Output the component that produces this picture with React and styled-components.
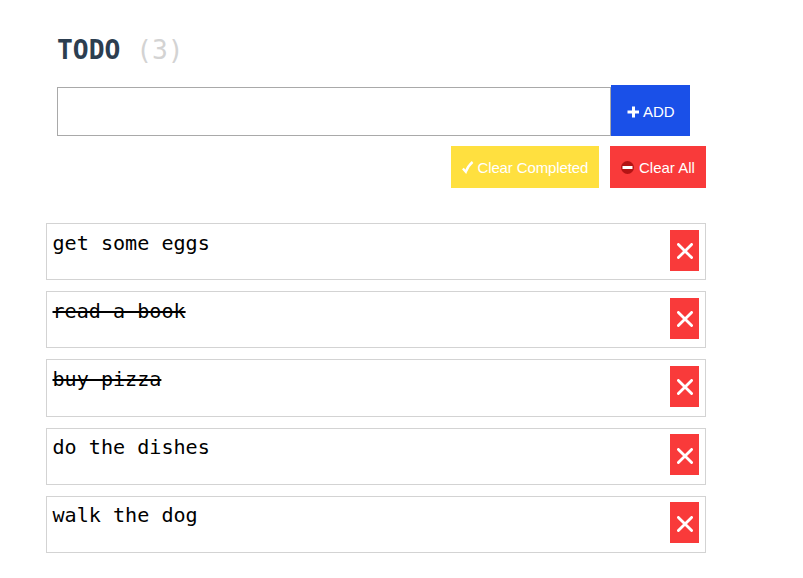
import React from "react";
import styled, { createGlobalStyle, css } from "styled-components";

const GlobalStyle = createGlobalStyle`
  * { box-sizing: border-box; }
  body { margin: 0; background: #fff; overflow: hidden; }
`;

const mono = `Consolas, "DejaVu Sans Mono", monospace`;
const sans = `"Liberation Sans", Arial, sans-serif`;

const Page = styled.main`
  width: 803px;
  height: 578px;
  padding: 30px 97px 0 46px;
  font-family: ${mono};
`;

const Title = styled.h1`
  margin: 0 0 0 11px;
  height: 55px;
  font-size: 26.3px;
  line-height: 40px;
  font-weight: 700;
  color: #2c3e50;
  white-space: pre;
`;

const Count = styled.span`
  font-weight: 400;
  color: #d3d3d3;
`;

const AddForm = styled.form`
  display: flex;
  align-items: flex-end;
  height: 51px;
  margin-left: 11px;
`;

const TextInput = styled.input`
  width: 554px;
  height: 49px;
  padding: 0 10px;
  border: 1px solid #a9a9a9;
  border-radius: 0;
  outline: none;
  font: 20px ${mono};
`;

const tones = {
  blue: css`background: #1a50e8;`,
  yellow: css`background: #ffe03f;`,
  red: css`background: #f93a3a;`,
};

const Button = styled.button`
  display: flex;
  align-items: center;
  width: ${(p) => p.$width}px;
  height: ${(p) => p.$height}px;
  padding: ${(p) => p.$top || 0}px 0 0 ${(p) => p.$inset}px;
  gap: ${(p) => p.$gap}px;
  border: 0;
  font: 15px ${sans};
  letter-spacing: ${(p) => p.$tracking || 0}px;
  color: #fff;
  white-space: nowrap;
  ${(p) => tones[p.$tone]}
`;

const Actions = styled.div`
  display: flex;
  justify-content: flex-end;
  gap: 11px;
  margin-top: 10px;
`;

const List = styled.ul`
  list-style: none;
  margin: 35px 0 0;
  padding: 0;
  display: flex;
  flex-direction: column;
  gap: 11px;
`;

const Item = styled.li`
  display: flex;
  justify-content: space-between;
  align-items: flex-start;
  height: 57.2px;
  padding: 5.6px 6px 0 5.5px;
  border: 1px solid #d3d3d3;
`;

const Label = styled.span`
  font-size: 20.1px;
  line-height: 26px;
  color: #000;
  text-decoration: ${(p) => (p.$done ? "line-through 2px" : "none")};
`;

const DeleteButton = styled.button`
  display: flex;
  align-items: center;
  justify-content: center;
  width: 29px;
  height: 41px;
  padding: 2px 0 0 1px;
  border: 0;
  background: #f93a3a;
`;

const Icon = styled.svg`
  flex: none;
  display: block;
`;

const PlusIcon = () => (
  <Icon width="12" height="12" viewBox="0 0 12 12">
    <path d="M6.5 0.5V11.5M0.5 6H12" stroke="#fff" strokeWidth="3" />
  </Icon>
);

const CheckIcon = () => (
  <Icon width="12" height="13" viewBox="0 0 12 13">
    <path d="M0.9 7.4L3.8 10.8C5 7.4 7.5 3.6 10.6 1" fill="none" stroke="#fff" strokeWidth="2.3" />
  </Icon>
);

const MinusIcon = () => (
  <Icon width="13" height="13" viewBox="0 0 13 13">
    <circle cx="6.5" cy="6.5" r="6.5" fill="#b31414" />
    <path d="M1.5 6.5H11.5" stroke="#fff" strokeWidth="3" />
  </Icon>
);

const CrossIcon = () => (
  <Icon width="16" height="16" viewBox="0 0 16 16">
    <path d="M1.4 1.4L14.6 14.6M14.6 1.4L1.4 14.6" stroke="#fff" strokeWidth="2.8" strokeLinecap="round" />
  </Icon>
);

const todos = [
  { text: "get some eggs", done: false },
  { text: "read a book", done: true },
  { text: "buy pizza", done: true },
  { text: "do the dishes", done: false },
  { text: "walk the dog", done: false },
];

export default function App() {
  return (
    <Page>
      <GlobalStyle />
      <Title>TODO <Count>(3)</Count></Title>
      <AddForm onSubmit={(e) => e.preventDefault()}>
        <TextInput aria-label="New todo" />
        <Button $tone="blue" $width={79} $height={51} $top={2} $inset={16} $gap={4}>
          <PlusIcon />ADD
        </Button>
      </AddForm>
      <Actions>
        <Button $tone="yellow" $width={148} $height={42} $top={1} $inset={11} $gap={3.5} $tracking={-0.13}>
          <CheckIcon />Clear Completed
        </Button>
        <Button $tone="red" $width={96} $height={42} $top={1} $inset={11} $gap={5}>
          <MinusIcon />Clear All
        </Button>
      </Actions>
      <List>
        {todos.map((t) => (
          <Item key={t.text}>
            <Label $done={t.done}>{t.text}</Label>
            <DeleteButton aria-label="Delete"><CrossIcon /></DeleteButton>
          </Item>
        ))}
      </List>
    </Page>
  );
}
